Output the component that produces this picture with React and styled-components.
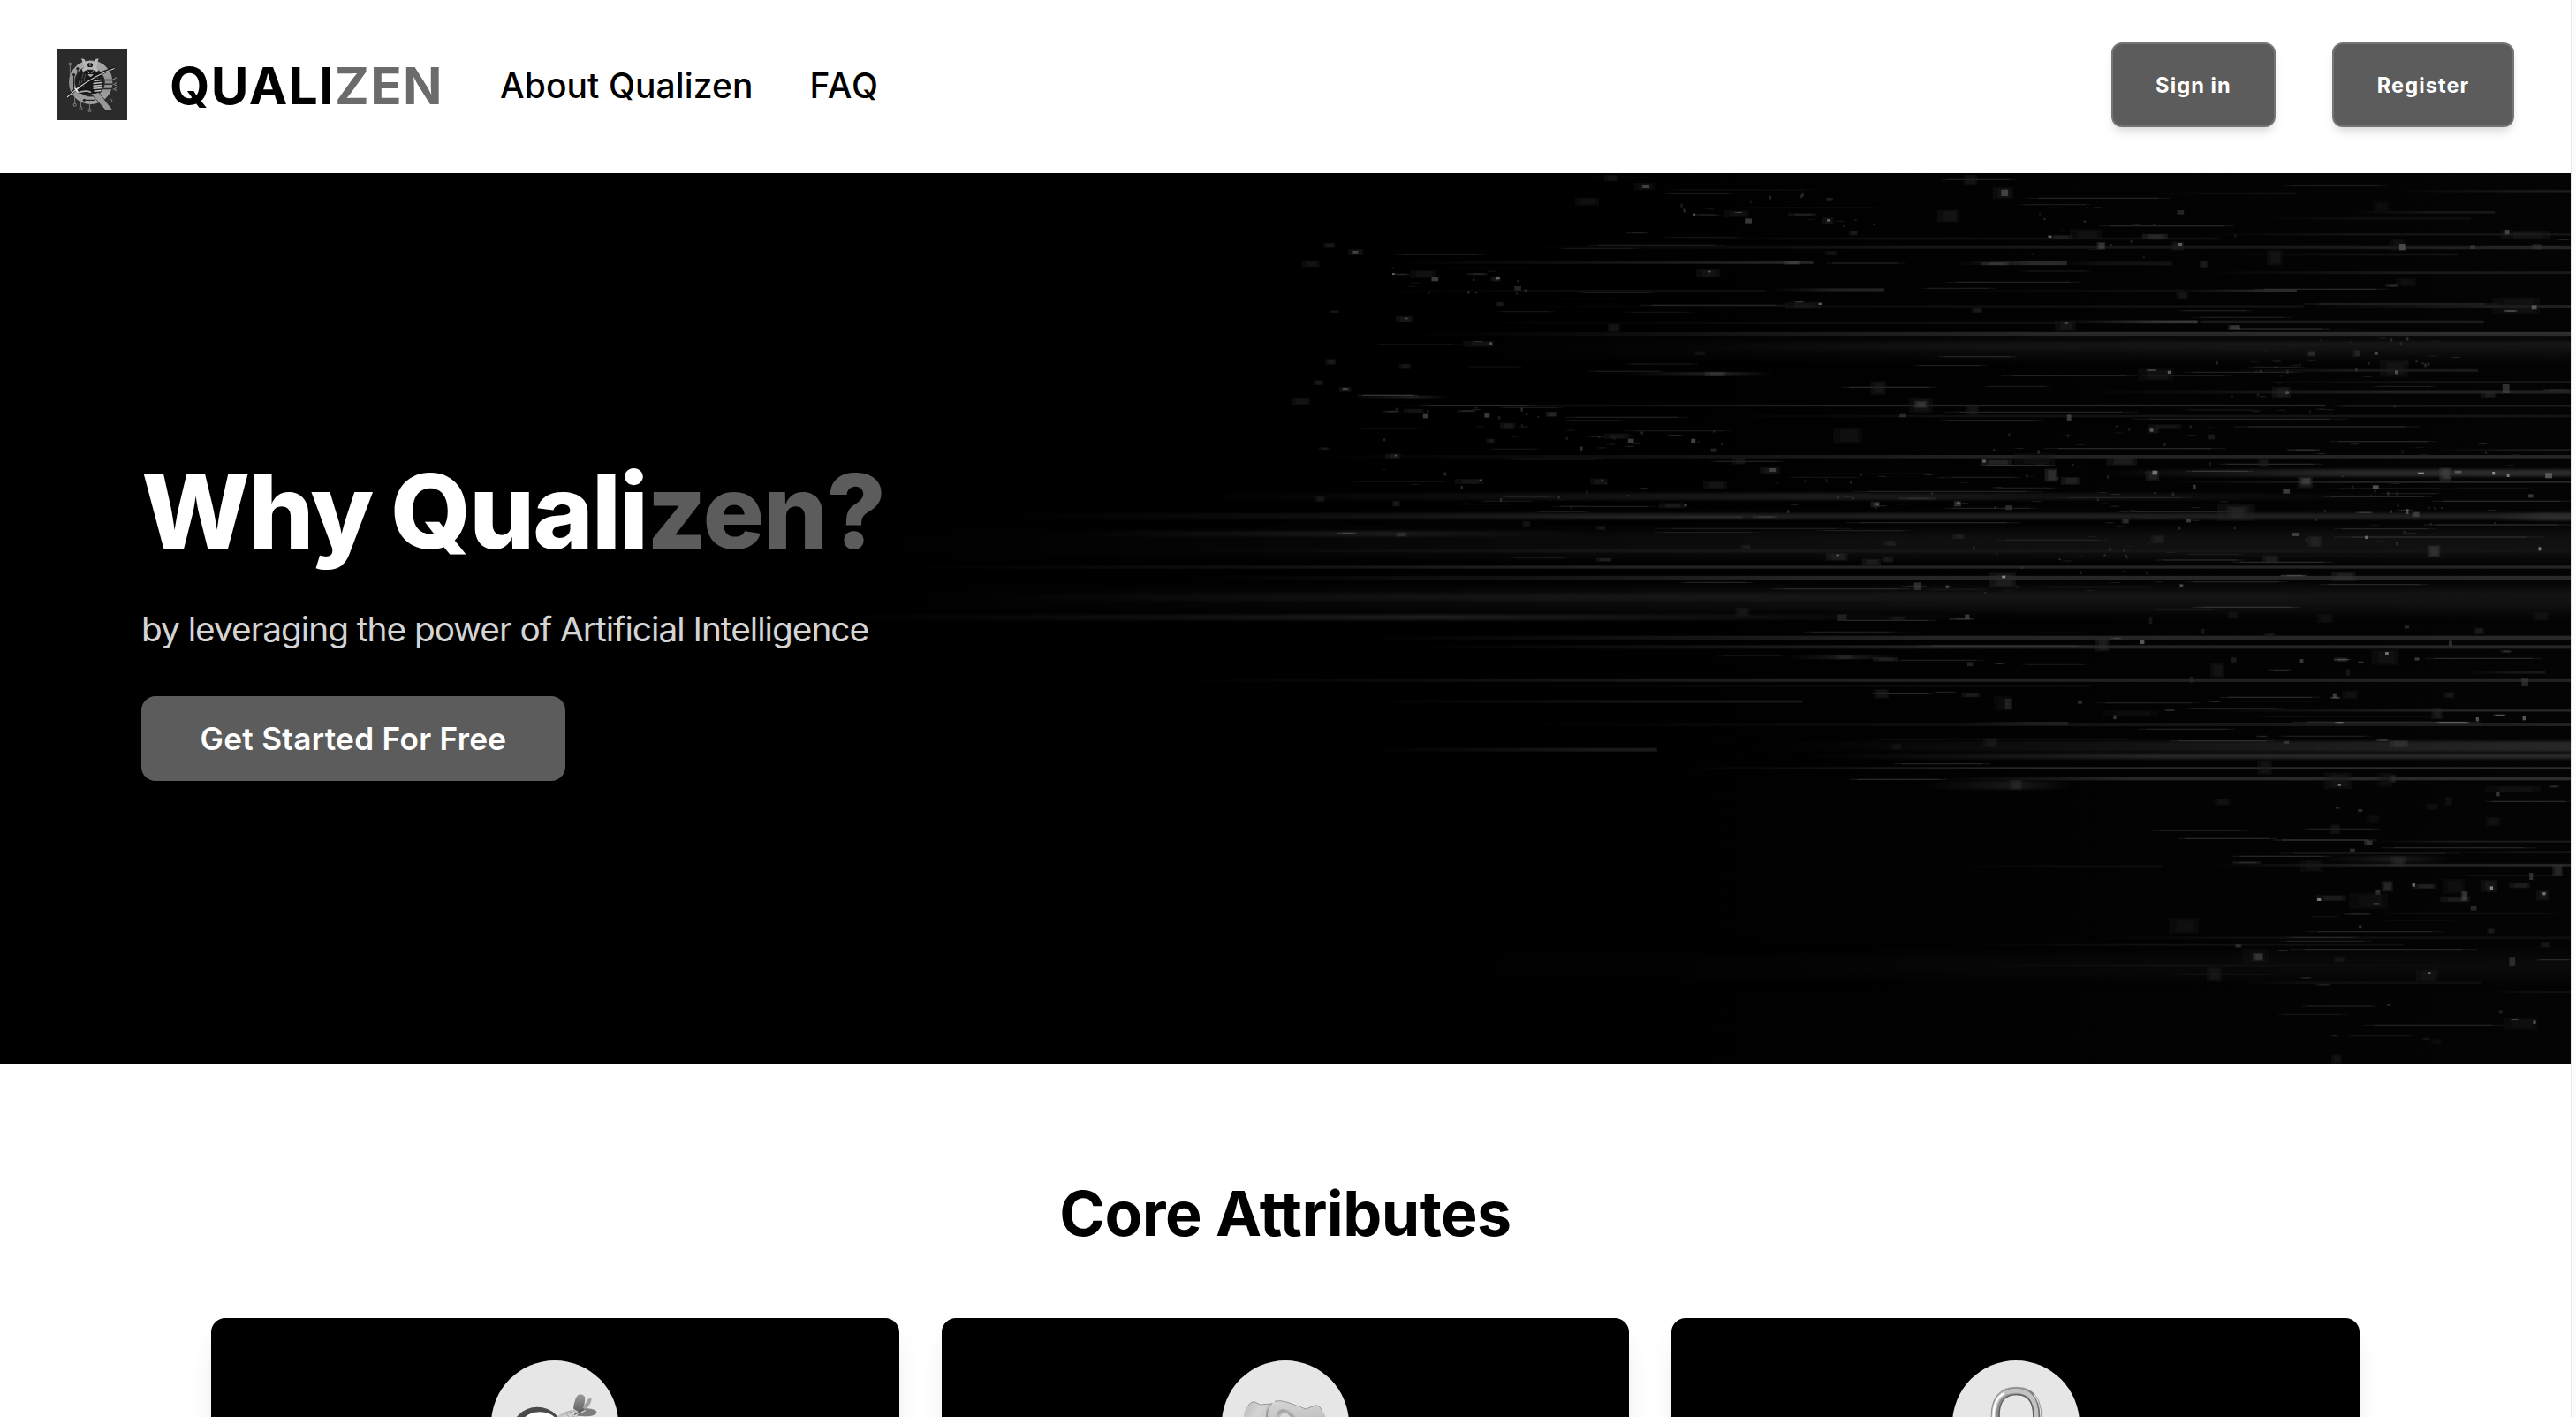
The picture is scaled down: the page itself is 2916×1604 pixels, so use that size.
import React from 'react';
import styled, { createGlobalStyle } from 'styled-components';

const GlobalStyle = createGlobalStyle`
  *, *::before, *::after { box-sizing: border-box; }
  html, body { margin: 0; padding: 0; background: #fff; }
  body {
    height: 1604px;
    overflow: hidden;
    font-family: Inter, 'Noto Sans', 'Liberation Sans', sans-serif;
    color: #000;
  }
  h1, h2, p { margin: 0; }
`;

const Shell = styled.div`
  display: grid;
  grid-template-columns: minmax(0, 1fr) 6px;
  height: 1604px;
  overflow: hidden;
`;

const ScrollTrack = styled.div`
  background: #fcfcfc;
  border-left: 2px solid #e8e8e8;
`;

const Page = styled.main`
  display: flex;
  flex-direction: column;
  min-width: 0;
`;

const Header = styled.header`
  display: flex;
  justify-content: space-between;
  align-items: flex-start;
  height: 196px;
  flex: none;
  padding: 48px 64px 0;
`;

const HeaderGroup = styled.div`
  display: flex;
  align-items: center;
  height: 96px;
  gap: 64px;
`;

const Brand = styled.a`
  display: flex;
  align-items: center;
  gap: 48px;
`;

const Wordmark = styled.span`
  font-size: 58.4px;
  line-height: 72px;
  font-weight: 700;
  letter-spacing: 1.4px;
  padding-top: 2px;
`;

const Muted = styled.span`
  color: ${p => p.$color};
`;

const NavLink = styled.a`
  font-size: 39px;
  line-height: 56px;
  font-weight: 500;
  letter-spacing: ${p => p.$spacing}px;
  padding-top: 2px;
`;

const AuthButton = styled.button`
  width: ${p => p.$width}px;
  height: 96px;
  padding: 1px 0 0;
  border: 2px solid #757575;
  border-radius: 12px;
  background: #5c5c5c;
  box-shadow: 0 8px 12px -2px rgba(0, 0, 0, 0.1), 0 4px 8px -4px rgba(0, 0, 0, 0.1);
  color: #fff;
  font: 700 23.6px/32px Inter, sans-serif;
  letter-spacing: 1.1px;
`;

const Hero = styled.section`
  position: relative;
  display: flex;
  flex-direction: column;
  justify-content: center;
  align-items: flex-start;
  flex: none;
  height: 1008px;
  padding-left: 160px;
  background: #000;
  overflow: hidden;
`;

const Backdrop = styled.svg`
  position: absolute;
  inset: 0;
  width: 100%;
  height: 100%;
`;

const HeroTitle = styled.h1`
  position: relative;
  margin-bottom: 43px;
  font-size: 116.5px;
  line-height: 125px;
  font-weight: 800;
  letter-spacing: -1.9px;
  word-spacing: -3px;
  color: #fff;
`;

const HeroText = styled.p`
  position: relative;
  margin-bottom: 48px;
  font-size: 38.8px;
  line-height: 56px;
  letter-spacing: -1px;
  color: #d4d4d4;
`;

const HeroButton = styled.button`
  position: relative;
  width: 480px;
  height: 96px;
  padding: 0;
  border: 0;
  border-radius: 16px;
  background: #5c5c5c;
  color: #fff;
  font: 600 35.2px/56px Inter, sans-serif;
  letter-spacing: 0.3px;
`;

const Attributes = styled.section`
  display: flex;
  flex-direction: column;
  align-items: center;
  padding-top: 130px;
`;

const SectionTitle = styled.h2`
  margin-bottom: 78px;
  font-size: 69.9px;
  line-height: 80px;
  font-weight: 700;
  letter-spacing: -0.55px;
`;

const CardGrid = styled.div`
  display: grid;
  grid-template-columns: repeat(3, 1fr);
  gap: 48px;
  width: 2432px;
`;

const Card = styled.article`
  display: flex;
  justify-content: center;
  align-items: flex-start;
  height: 480px;
  padding-top: 48px;
  border-radius: 16px;
  background: #000;
  box-shadow: 0 20px 30px -6px rgba(0, 0, 0, 0.1), 0 8px 12px -8px rgba(0, 0, 0, 0.1);
`;

const IconDisc = styled.div`
  width: 144px;
  height: 144px;
  border-radius: 50%;
  background: #e6e6e6;
  overflow: hidden;
`;

/* Long glowing bands: [fade-in start, full brightness, end, centre y, height, grey, fades out at end] */
const midBands = [
  [340, 900, 1450, 66, 24, 30, 1], [180, 700, 1566, 133, 20, 32, 0], [240, 520, 710, 193, 18, 36, 1],
  [330, 900, 1566, 250, 13, 40, 0], [90, 700, 1566, 306, 10, 38, 0], [330, 900, 1566, 343, 15, 42, 0],
  [130, 1000, 1566, 408, 26, 44, 0], [50, 1000, 1566, 228, 90, 17, 0], [70, 1000, 1566, 415, 80, 18, 0],
  [30, 560, 1070, 476, 18, 34, 1], [500, 1000, 1566, 546, 14, 40, 0], [540, 1000, 1566, 577, 12, 38, 0],
  [330, 900, 1566, 691, 9, 36, 0], [497, 740, 887, 762, 9, 24, 0], [510, 700, 759, 926, 12, 26, 0],
  [1230, 1450, 1566, 793, 7, 40, 0], [620, 1500, 1566, 840, 12, 34, 0], [1030, 1090, 1121, 837, 12, 32, 0],
  [830, 1566, 1567, 915, 36, 44, 0], [880, 1200, 1566, 948, 18, 42, 0], [770, 1100, 1566, 989, 8, 46, 0],
  [1000, 1180, 1566, 1025, 10, 44, 0], [560, 900, 1140, 709, 8, 12, 0], [920, 1050, 1175, 890, 6, 16, 0],
  [870, 925, 975, 612, 14, 30, 1], [990, 1075, 1125, 1046, 28, 28, 1], [1470, 1510, 1541, 664, 8, 24, 0],
];

const topBands = [
  [200, 1000, 1562, 564, 13, 50, 0], [540, 1150, 1562, 605, 26, 50, 0], [230, 1000, 1562, 612, 60, 16, 0],
  [80, 900, 1562, 982, 14, 38, 0], [140, 700, 1275, 807, 7, 38, 0], [1280, 1300, 1562, 808, 7, 30, 0],
  [1000, 1300, 1562, 1036, 24, 44, 0], [1080, 1300, 1562, 1066, 8, 40, 0], [330, 800, 1562, 269, 12, 24, 0],
  [1180, 1500, 1562, 273, 8, 38, 0], [180, 620, 675, 322, 9, 38, 0], [840, 930, 972, 324, 13, 44, 0],
  [960, 1010, 1095, 325, 12, 18, 0], [200, 400, 620, 418, 8, 14, 0], [620, 700, 758, 414, 10, 34, 0],
  [1090, 1200, 1241, 417, 8, 44, 0], [760, 1090, 1110, 417, 8, 16, 0], [960, 1080, 1125, 523, 11, 56, 0],
  [1125, 1130, 1460, 523, 10, 28, 0], [240, 700, 960, 526, 10, 14, 0], [1350, 1500, 1562, 79, 7, 28, 0],
  [1130, 1300, 1562, 226, 7, 22, 0], [1120, 1350, 1562, 356, 9, 26, 0], [300, 900, 1250, 471, 9, 20, 0],
  [1250, 1470, 1562, 471, 12, 32, 0], [970, 1350, 1562, 762, 9, 34, 0], [1180, 1400, 1562, 728, 8, 24, 0],
  [520, 900, 1562, 843, 8, 20, 0], [1400, 1500, 1562, 959, 8, 30, 0], [450, 565, 630, 700, 13, 38, 1],
  [1160, 1300, 1453, 688, 9, 26, 0], [500, 700, 1150, 240, 8, 14, 0], [1300, 1400, 1473, 151, 8, 24, 0],
  [1190, 1300, 1445, 172, 8, 14, 0], [1060, 1150, 1240, 87, 8, 14, 0], [1130, 1300, 1430, 294, 8, 18, 0],
  [1470, 1530, 1562, 1185, 24, 46, 0], [130, 205, 250, 779, 12, 32, 1], [350, 560, 592, 1186, 7, 42, 0],
];

const lowBands = [
  [750, 1050, 1485, 939, 8, 50, 0], [50, 1200, 1562, 940, 80, 10, 0], [1070, 1300, 1562, 598, 9, 36, 0],
  [1290, 1400, 1562, 518, 6, 28, 0], [700, 950, 1335, 869, 6, 16, 0], [1380, 1500, 1562, 554, 7, 26, 0],
  [700, 900, 1010, 601, 6, 14, 0], [1450, 1500, 1562, 1029, 5, 18, 0], [1100, 1200, 1440, 998, 8, 14, 0],
  [1220, 1325, 1400, 578, 22, 30, 1], [910, 1100, 1562, 845, 8, 14, 0],
];

/* Hairline streaks: [start, end, y, grey] */
const topStreaks = [
  [405, 490, 34, 34], [825, 912, 40, 58], [1227, 1347, 60, 72], [500, 582, 88, 46], [505, 680, 75, 26],
  [925, 1092, 103, 60], [916, 1000, 125, 44], [595, 755, 136, 52], [1010, 1168, 197, 62], [500, 590, 236, 34],
  [410, 572, 262, 48], [378, 470, 274, 42], [185, 290, 295, 44], [690, 782, 324, 56], [235, 355, 343, 34],
  [830, 988, 388, 58], [803, 888, 409, 48], [1190, 1347, 412, 66], [400, 490, 424, 44], [370, 455, 445, 30],
  [472, 645, 466, 62], [1248, 1480, 462, 74], [305, 372, 488, 36], [455, 533, 490, 30], [1103, 1188, 485, 54],
  [1120, 1235, 508, 48], [1160, 1280, 546, 70], [1180, 1325, 550, 50], [160, 262, 600, 42], [822, 912, 641, 62],
  [455, 540, 666, 40], [792, 878, 671, 52], [412, 502, 691, 44], [1108, 1248, 694, 56], [895, 1055, 706, 58],
  [1060, 1165, 706, 42], [708, 820, 745, 66], [875, 953, 742, 44], [1330, 1404, 742, 46], [142, 212, 772, 88],
  [215, 350, 808, 64], [308, 382, 814, 44], [828, 1055, 829, 60], [1108, 1200, 822, 40], [385, 528, 847, 50],
  [383, 452, 857, 38], [824, 942, 857, 56], [1048, 1300, 853, 60], [1167, 1385, 879, 68], [455, 580, 893, 40],
  [1280, 1405, 929, 64], [945, 1158, 953, 66], [295, 355, 955, 34], [555, 640, 997, 56], [870, 958, 1010, 84],
  [1150, 1270, 1006, 66], [1112, 1190, 1030, 84], [660, 825, 1039, 44], [830, 918, 1051, 48], [645, 732, 1051, 34],
  [1280, 1420, 1090, 92], [1420, 1518, 1090, 70], [885, 960, 1087, 46], [722, 942, 1099, 58], [310, 372, 1118, 46],
  [960, 1120, 1120, 52], [1270, 1400, 1117, 60], [285, 348, 1132, 38], [1400, 1562, 1132, 70], [258, 322, 1142, 34],
  [370, 490, 1150, 50], [828, 938, 1156, 54], [1035, 1182, 1168, 56], [350, 412, 1168, 44], [714, 918, 1205, 64],
  [130, 172, 1219, 40], [490, 720, 1225, 46], [680, 788, 1232, 48], [1285, 1405, 1226, 60], [490, 612, 1238, 46],
  [1390, 1562, 1212, 72], [890, 1020, 1264, 50], [1285, 1530, 1254, 66], [320, 388, 1325, 36], [1075, 1180, 1332, 66],
  [1165, 1283, 1339, 68], [1110, 1180, 1312, 42], [520, 604, 1408, 42], [1110, 1230, 1406, 60], [1268, 1395, 1415, 62],
  [630, 786, 1430, 42], [810, 878, 1432, 36], [945, 1075, 1424, 48], [1122, 1244, 1492, 56], [1455, 1562, 267, 60],
  [180, 240, 421, 28], [268, 335, 675, 26], [150, 215, 755, 24], [145, 215, 886, 24], [135, 250, 1066, 28],
  [918, 1000, 351, 40], [1185, 1250, 676, 46], [1340, 1410, 1106, 48], [315, 430, 990, 32],
];

const midStreaks = [
  [782, 843, 358, 44], [860, 982, 380, 52], [1098, 1195, 373, 56], [918, 1005, 487, 62], [1230, 1325, 442, 60],
  [888, 970, 526, 50], [942, 992, 529, 46], [988, 1142, 573, 66], [845, 908, 580, 44], [968, 1046, 622, 52],
  [812, 872, 607, 30], [1435, 1538, 616, 66], [1080, 1138, 637, 38], [1088, 1140, 529, 40], [1195, 1252, 448, 34],
];

const midBlocks = [
  [828, 444, 12, 28, 34], [918, 466, 8, 22, 44], [1030, 467, 4, 14, 90], [1016, 479, 22, 6, 80], [963, 472, 14, 16, 34],
  [1145, 548, 12, 44, 44], [1159, 545, 9, 5, 90], [1184, 553, 4, 14, 130], [1293, 528, 10, 20, 34], [1340, 465, 14, 30, 24],
  [1530, 458, 14, 30, 26], [1478, 512, 9, 22, 40], [1417, 505, 4, 9, 60], [1388, 586, 24, 52, 26], [1400, 594, 3, 9, 160],
  [1355, 612, 12, 16, 46], [1355, 618, 14, 4, 120], [1325, 618, 3, 14, 80], [1264, 613, 5, 16, 40], [1246, 632, 12, 48, 30],
  [1426, 613, 4, 10, 80], [1297, 653, 20, 5, 60], [1366, 652, 3, 22, 34], [949, 612, 22, 14, 46], [916, 605, 16, 14, 44],
  [1032, 628, 5, 14, 50], [1056, 630, 9, 6, 66], [1228, 678, 3, 20, 44], [1520, 684, 6, 26, 58], [1502, 588, 9, 8, 66],
  [1262, 458, 8, 20, 24], [1238, 515, 3, 18, 34], [1192, 475, 3, 24, 34], [1456, 556, 3, 18, 66], [1376, 626, 5, 6, 70],
];

const lowStreaks = [
  [618, 700, 16, 74], [702, 732, 10, 52], [1088, 1222, 28, 66], [922, 1060, 47, 52], [1105, 1225, 41, 48],
  [1042, 1172, 67, 50], [1130, 1385, 92, 64], [1185, 1440, 112, 74], [1380, 1425, 113, 130], [978, 1108, 136, 54],
  [1020, 1162, 176, 68], [1168, 1290, 160, 52], [648, 778, 254, 60], [588, 720, 307, 72], [1445, 1562, 382, 66],
  [1200, 1304, 475, 52], [995, 1125, 481, 54], [1030, 1165, 508, 66], [1160, 1300, 513, 92], [1305, 1515, 539, 64],
  [1168, 1412, 558, 50], [1105, 1238, 568, 66], [1410, 1562, 632, 66], [1305, 1550, 761, 68], [1308, 1405, 787, 50],
  [1205, 1388, 824, 60], [1175, 1275, 844, 52], [1168, 1292, 856, 54], [1182, 1435, 884, 62], [1515, 1562, 920, 64],
  [1024, 1165, 968, 66], [1198, 1300, 1077, 50], [1165, 1260, 1105, 34], [1282, 1470, 1141, 60], [1260, 1350, 1178, 32],
  [1210, 1248, 773, 30], [618, 725, 172, 20],
];

/* Glowing blocks and sparks: [x, y, width, height, grey] */
const topBlocks = [
  [430, 24, 16, 22, 28], [465, 50, 24, 26, 26], [475, 57, 8, 12, 90], [396, 101, 28, 27, 24], [851, 24, 16, 34, 30],
  [885, 66, 24, 40, 28], [895, 74, 8, 22, 90], [820, 143, 26, 42, 30], [1330, 115, 20, 36, 18], [570, 144, 30, 24, 26],
  [583, 150, 9, 3, 110], [595, 172, 8, 16, 84], [534, 156, 28, 9, 44], [534, 155, 3, 6, 130], [645, 154, 34, 9, 48],
  [685, 168, 14, 24, 34], [691, 174, 4, 8, 140], [717, 213, 10, 16, 44], [689, 282, 14, 15, 34], [690, 102, 8, 8, 44],
  [102, 255, 13, 17, 40], [130, 276, 18, 21, 34], [136, 282, 6, 8, 96], [76, 316, 21, 21, 30], [456, 219, 25, 4, 52],
  [975, 208, 38, 34, 26], [950, 228, 28, 15, 42], [950, 230, 4, 7, 140], [1007, 252, 10, 26, 84], [1060, 224, 30, 17, 60],
  [1093, 250, 16, 31, 34], [1102, 255, 5, 9, 130], [1101, 144, 8, 14, 54], [1206, 278, 18, 54, 28], [1127, 316, 10, 23, 42],
  [1350, 240, 18, 42, 24], [1361, 258, 7, 22, 100], [1480, 216, 58, 26, 30], [1485, 210, 5, 16, 92], [1546, 240, 14, 5, 90],
  [1516, 258, 13, 20, 54], [1444, 262, 6, 14, 66], [538, 345, 28, 27, 32], [552, 350, 3, 5, 120], [872, 321, 32, 10, 74],
  [640, 316, 20, 13, 76], [203, 348, 30, 26, 28], [228, 369, 8, 16, 88], [182, 359, 20, 5, 60], [182, 357, 3, 6, 130],
  [270, 357, 23, 7, 54], [297, 368, 12, 18, 38], [304, 372, 4, 7, 140], [325, 402, 8, 14, 54], [303, 455, 10, 14, 42],
  [108, 484, 12, 8, 40], [186, 503, 21, 22, 36], [197, 509, 3, 5, 110], [642, 455, 42, 24, 32], [653, 453, 11, 4, 92],
  [681, 458, 4, 7, 130], [860, 476, 13, 16, 40], [434, 530, 15, 27, 34], [1470, 440, 56, 58, 26], [1516, 466, 6, 15, 120],
  [1483, 483, 16, 6, 110], [1357, 375, 24, 28, 22], [1100, 421, 14, 24, 34], [958, 518, 24, 36, 34], [969, 524, 4, 6, 110],
  [1161, 534, 14, 14, 86], [1345, 397, 15, 7, 70], [265, 588, 36, 20, 30], [276, 588, 12, 3, 80], [296, 592, 3, 8, 120],
  [535, 622, 14, 15, 28], [104, 649, 12, 19, 42], [190, 665, 14, 18, 36], [548, 692, 24, 16, 62], [90, 721, 11, 17, 38],
  [120, 744, 14, 17, 42], [124, 747, 6, 9, 90], [64, 782, 22, 22, 32], [742, 724, 18, 46, 34], [787, 780, 28, 52, 28],
  [793, 792, 15, 23, 72], [853, 806, 16, 34, 34], [1055, 682, 42, 40, 26], [1065, 684, 12, 6, 100], [1090, 689, 4, 10, 130],
  [1338, 654, 34, 56, 28], [1356, 688, 4, 12, 110], [1212, 743, 22, 38, 40], [1228, 760, 4, 8, 100], [1253, 622, 10, 18, 60],
  [1307, 618, 9, 24, 50], [1332, 626, 4, 9, 110], [1457, 758, 18, 22, 42], [1482, 735, 8, 30, 70], [1530, 750, 32, 9, 58],
  [195, 818, 24, 16, 32], [218, 836, 6, 14, 86], [172, 824, 18, 6, 64], [258, 822, 22, 7, 56], [290, 834, 6, 14, 88],
  [362, 828, 13, 17, 62], [308, 866, 18, 21, 38], [292, 920, 10, 14, 42], [698, 881, 34, 56, 25], [776, 836, 8, 11, 60],
  [972, 838, 5, 22, 84], [1066, 871, 40, 17, 32], [1066, 880, 14, 22, 34], [1069, 886, 4, 10, 130], [430, 902, 30, 18, 32],
  [411, 909, 20, 5, 70], [458, 920, 7, 15, 90], [504, 906, 18, 6, 64], [532, 920, 5, 14, 100], [555, 953, 7, 12, 52],
  [174, 970, 18, 20, 40], [185, 974, 2, 5, 120], [96, 949, 12, 9, 40], [612, 1016, 24, 24, 36], [624, 1020, 7, 12, 90],
  [546, 1064, 28, 27, 30], [580, 985, 16, 22, 34], [872, 991, 36, 18, 56], [873, 991, 4, 10, 130], [910, 970, 48, 40, 24],
  [946, 1022, 15, 44, 70], [965, 1050, 22, 26, 50], [1018, 984, 36, 26, 42], [1064, 1028, 16, 34, 48], [1072, 1028, 6, 14, 160],
  [1195, 988, 14, 28, 34], [1230, 955, 38, 8, 72], [1137, 905, 8, 17, 40], [1242, 1048, 18, 40, 44], [1245, 1052, 13, 24, 76],
  [1408, 1018, 13, 44, 72], [1383, 1034, 7, 5, 190], [1470, 1032, 3, 10, 200], [1487, 1040, 3, 10, 170], [1532, 1036, 8, 18, 120],
  [1330, 1078, 7, 12, 120], [1426, 1028, 8, 9, 110], [1148, 1143, 44, 56, 32], [1160, 1150, 22, 42, 40], [255, 1056, 34, 18, 34],
  [284, 1058, 3, 7, 120], [414, 1055, 20, 21, 36], [427, 1058, 2, 6, 110], [92, 1115, 11, 19, 36], [182, 1131, 9, 19, 42],
  [494, 1138, 30, 18, 38], [524, 1143, 3, 7, 110], [742, 1133, 11, 20, 60], [748, 1138, 4, 9, 100], [840, 1132, 8, 18, 70],
  [843, 1136, 4, 7, 130], [900, 1146, 8, 16, 60], [334, 1200, 10, 18, 32], [421, 1215, 11, 15, 38], [118, 1238, 22, 4, 100],
  [186, 1238, 13, 15, 62], [604, 1182, 28, 7, 66], [774, 1119, 44, 8, 58], [1036, 1192, 9, 16, 70], [1112, 1192, 5, 12, 90],
  [1236, 1239, 8, 12, 90], [1254, 1250, 16, 38, 46], [1070, 1248, 16, 28, 40], [838, 1245, 14, 16, 44], [758, 1266, 14, 18, 42],
  [590, 1280, 12, 16, 38], [690, 1308, 25, 26, 44], [702, 1313, 3, 5, 160], [732, 1328, 22, 20, 44], [755, 1320, 14, 20, 38],
  [1394, 1282, 15, 40, 66], [1524, 1288, 3, 12, 170], [1321, 1250, 3, 10, 150], [421, 1325, 18, 12, 50], [880, 1375, 32, 50, 44],
  [896, 1385, 4, 8, 190], [1222, 1382, 30, 5, 110], [1282, 1374, 28, 30, 50], [1200, 1316, 20, 26, 42], [778, 1418, 30, 8, 50],
  [793, 1408, 8, 26, 64], [830, 1418, 4, 9, 120], [1104, 1414, 4, 10, 110], [1376, 1168, 9, 18, 86], [1310, 1168, 20, 6, 80],
  [1358, 1162, 20, 5, 96], [1369, 1158, 3, 18, 110], [1225, 1092, 8, 14, 86], [1512, 1108, 6, 12, 80], [1120, 1076, 3, 16, 80],
];

const lowBlocks = [
  [621, 0, 20, 32, 34], [740, 14, 24, 14, 44], [783, 24, 24, 50, 20], [798, 33, 8, 36, 46], [896, 42, 6, 8, 66],
  [1013, 69, 14, 6, 70], [1072, 40, 17, 5, 62], [944, 88, 4, 14, 84], [930, 72, 75, 22, 18], [1236, 26, 14, 7, 90],
  [1240, 17, 5, 12, 90], [1252, 5, 22, 28, 26], [1390, 10, 14, 20, 36], [1373, 66, 15, 36, 40], [1433, 96, 4, 13, 120],
  [1457, 86, 16, 5, 130], [1496, 90, 4, 16, 130], [1243, 111, 12, 4, 150], [645, 186, 14, 20, 28], [768, 166, 20, 33, 30],
  [1137, 158, 15, 5, 58], [1174, 176, 7, 10, 70], [1299, 170, 16, 7, 80], [1316, 174, 26, 24, 58], [1138, 242, 20, 48, 30],
  [1228, 283, 38, 56, 28], [1247, 321, 4, 8, 170], [1316, 290, 9, 28, 50], [1300, 284, 20, 48, 22], [804, 309, 17, 32, 46],
  [1080, 372, 22, 23, 26], [1446, 330, 74, 22, 24], [1461, 348, 4, 16, 80], [1531, 328, 14, 6, 66], [1446, 435, 20, 30, 26],
  [1284, 427, 20, 30, 18], [1236, 460, 14, 32, 32], [1391, 365, 10, 32, 24], [1366, 390, 16, 20, 24], [1244, 402, 5, 5, 60],
  [1274, 408, 6, 9, 62], [1282, 514, 12, 16, 80], [1196, 580, 30, 40, 26], [1105, 586, 38, 7, 62], [1318, 568, 20, 34, 46],
  [1263, 542, 7, 10, 66], [1306, 652, 15, 36, 60], [1298, 684, 6, 15, 70], [1218, 700, 40, 20, 44], [1219, 708, 5, 12, 180],
  [1262, 692, 52, 54, 22], [1294, 726, 9, 5, 86], [1348, 662, 32, 16, 50], [1347, 660, 4, 11, 150], [1388, 645, 30, 50, 22],
  [1385, 704, 40, 20, 44], [1413, 686, 9, 34, 86], [1440, 648, 22, 42, 34], [1452, 670, 4, 14, 180], [1514, 682, 18, 36, 34],
  [1523, 690, 4, 10, 160], [1478, 658, 28, 18, 44], [1505, 624, 5, 24, 70], [1536, 596, 14, 40, 58], [1019, 778, 40, 52, 24],
  [1108, 867, 9, 11, 70], [1165, 885, 15, 5, 66], [1118, 880, 36, 52, 20], [1132, 897, 14, 26, 76], [1070, 946, 20, 44, 30],
  [1242, 910, 15, 17, 32], [1352, 952, 30, 42, 26], [1368, 961, 4, 6, 150], [1478, 910, 8, 30, 60], [1197, 978, 14, 5, 58],
  [1217, 1002, 20, 5, 50], [1255, 762, 36, 5, 62], [1426, 738, 8, 14, 58], [1448, 814, 10, 16, 44], [1520, 858, 14, 20, 36],
  [1470, 1115, 46, 42, 22], [1480, 1120, 11, 5, 110], [1510, 1126, 4, 11, 110], [1237, 1176, 10, 4, 50], [1360, 1186, 11, 4, 50],
  [1238, 1240, 14, 32, 28], [1372, 1188, 15, 18, 16], [1275, 802, 4, 12, 70], [1313, 1071, 5, 5, 60], [1464, 1090, 5, 12, 44],
];

/* Specks scattered through the dense parts of the field: [x, y, spread x, spread y, count, seed] */
const clusters = [
  [500, 80, 260, 120, 14, 3], [180, 330, 180, 100, 12, 7], [920, 130, 260, 170, 16, 11], [170, 800, 220, 120, 16, 5],
  [400, 880, 190, 80, 14, 17], [170, 1000, 320, 160, 16, 23], [620, 1040, 340, 130, 26, 31], [980, 1100, 200, 120, 22, 37],
  [1180, 570, 220, 110, 26, 41], [840, 860, 300, 200, 22, 43], [1250, 930, 300, 340, 40, 47], [820, 1250, 280, 200, 28, 53],
  [1130, 640, 300, 200, 20, 59],
];

const specks = clusters.flatMap(([x, y, w, h, count, seed]) => {
  let s = seed * 7919;
  const next = () => {
    s = (s * 16807) % 2147483647;
    return s / 2147483647;
  };
  return Array.from({ length: count }, () => {
    const flat = next() > 0.6;
    return [x + next() * w, y + next() * h, flat ? 11 : 2.5, flat ? 3 : 4 + next() * 9, 28 + Math.round(next() * 36)];
  });
});

const grey = v => `rgb(${v},${v},${v})`;

function Bands({ items, name }) {
  return items.map(([x0, x1, x2, y, h, g, out], i) => {
    const id = `${name}-${i}`;
    const peak = ((x1 - x0) / (x2 - x0)) * 100;
    return (
      <React.Fragment key={id}>
        <linearGradient id={id}>
          <stop offset="0%" stopColor={grey(g)} stopOpacity="0" />
          <stop offset={`${peak * 0.5}%`} stopColor={grey(g)} stopOpacity="0.42" />
          <stop offset={`${peak}%`} stopColor={grey(g)} stopOpacity="0.9" />
          <stop offset="100%" stopColor={grey(g)} stopOpacity={out ? 0 : 1} />
        </linearGradient>
        <rect
          x={x0} y={y - h / 2} width={x2 - x0} height={h}
          fill={`url(#${id})`}
          filter={h > 50 ? 'url(#haze)' : h > 16 ? 'url(#soft)' : 'url(#edge)'}
        />
      </React.Fragment>
    );
  });
}

function Streaks({ items }) {
  return items.map(([x0, x1, y, g], i) => (
    <g key={i} fill={grey(g)}>
      <rect x={x0} y={y - 1.8} width={x1 - x0} height="3.6" opacity="0.3" />
      <rect x={x0 + (x1 - x0) * 0.08} y={y - 1.8} width={(x1 - x0) * 0.84} height="3.6" opacity="0.45" />
    </g>
  ));
}

function Blocks({ items }) {
  return items.map(([x, y, w, h, g], i) => (
    <g key={i} fill={grey(g)}>
      <rect x={x} y={y} width={w} height={h} opacity={w > 8 ? 0.36 : 0.66} />
      {w > 8 && <rect x={x + w * 0.25} y={y + h * 0.12} width={w * 0.6} height={h * 0.76} opacity="0.42" />}
    </g>
  ));
}

function DataField() {
  return (
    <Backdrop viewBox="0 196 2910 1008" preserveAspectRatio="none" aria-hidden="true">
      <defs>
        <filter id="edge" x="-1%" width="102%" y="-60%" height="220%" colorInterpolationFilters="sRGB">
          <feGaussianBlur stdDeviation="0.5 2.2" />
        </filter>
        <filter id="soft" x="-1%" width="102%" y="-60%" height="220%" colorInterpolationFilters="sRGB">
          <feGaussianBlur stdDeviation="1 5" />
        </filter>
        <filter id="haze" x="-1%" width="102%" y="-60%" height="220%" colorInterpolationFilters="sRGB">
          <feGaussianBlur stdDeviation="2 18" />
        </filter>
        <linearGradient id="ambient">
          <stop offset="0.6" stopColor="#000" />
          <stop offset="1" stopColor="#040404" />
        </linearGradient>
      </defs>
      <rect y="196" width="2910" height="1008" fill="url(#ambient)" />
      <g transform="translate(900 540) scale(1.2857 0.33333)">
        <Bands items={midBands} name="mid" />
        <Streaks items={midStreaks} />
        <Blocks items={midBlocks} />
      </g>
      <g transform="translate(1400 190) scale(0.96684 0.33333)">
        <Bands items={topBands} name="top" />
        <Streaks items={topStreaks} />
        <Blocks items={topBlocks} />
        <Blocks items={specks} />
      </g>
      <g transform="translate(1600 780) scale(0.83929 0.33333)">
        <Bands items={lowBands} name="low" />
        <Streaks items={lowStreaks} />
        <Blocks items={lowBlocks} />
      </g>
    </Backdrop>
  );
}

function Logo() {
  return (
    <svg width="80" height="80" viewBox="0 0 80 80" role="img" aria-label="Qualizen logo">
      <defs>
        <linearGradient id="ring" x1="0" y1="0" x2="0" y2="1">
          <stop offset="0" stopColor="#a9a9a9" />
          <stop offset="0.5" stopColor="#8c8c8c" />
          <stop offset="1" stopColor="#a2a2a2" />
        </linearGradient>
      </defs>
      <rect width="80" height="80" fill="#2b2b2b" />
      <circle cx="38.7" cy="37.3" r="20.4" fill="none" stroke="url(#ring)" strokeWidth="8.6" />
      <circle cx="37" cy="36" r="16.4" fill="#202020" />
      <path d="M37.5 48 46 46.5 64 69H55.5z" fill="#989898" stroke="#2b2b2b" strokeWidth="0.8" />
      <path d="M53 34.5H65M53 39.3H65M53 44.5H65" stroke="#2b2b2b" strokeWidth="1.6" />
      <path d="M63.5 33.5H66M63.5 39.3H66M63.5 45H66M15.4 18V30M20.7 61V51L17 47M27.5 65V56L22 50M37.5 67.5V57.5" fill="none" stroke="#8e8e8e" strokeWidth="0.8" />
      <path d="M19.6 29V47M23.9 23V36M31.4 57.3H43" stroke="#222" strokeWidth="1.2" />
      <g fill="#2b2b2b" stroke="#9c9c9c" strokeWidth="0.8">
        <circle cx="15.4" cy="16.5" r="1.4" />
        <circle cx="67.1" cy="33.3" r="1.4" />
        <circle cx="67.1" cy="39.3" r="1.4" />
        <circle cx="67.1" cy="45" r="1.4" />
        <circle cx="20.7" cy="62.7" r="1.6" />
        <circle cx="27.5" cy="66.7" r="1.5" />
        <circle cx="37.5" cy="69" r="1.6" />
        <path d="M60.3 57.2q1.6-1.8 2.4 0v2.2" fill="none" />
      </g>
      <circle cx="23.9" cy="21.7" r="1.6" fill="#222" />
      <circle cx="19.6" cy="28.5" r="1.6" fill="#222" />
      <circle cx="31.4" cy="57.3" r="1.6" fill="#222" />
      <path d="M30 24 46 24 49 33 52 37 52 47 44 50 24 50 24 33z" fill="#181818" />
      <path d="M28 10.2 31.5 11 33.2 15 37.8 12.8 42.5 15 44.3 11 47.6 10.2 45 20.5 47.5 22.5 46 25.5 41 22.8H34.5L30 25.5 28.8 22.5 31.5 20z" fill="#b9b9b9" />
      <path d="M34 16.5Q37.8 12.5 42 16.5L40.5 20.5H35.5z" fill="#1a1a1a" stroke="#d0d0d0" strokeWidth="0.7" />
      <path d="M38 14.5V19M34 23.5 37 27M42 23.5 39.5 27M36 28.5H41L38.5 31z" stroke="#b0b0b0" strokeWidth="0.9" fill="#aaa" />
      <path d="M30.5 26.5 28.5 33M33 28 31 34M26 35 24.5 43M29 35 27 43M32 34 30.5 42M45 30 47 33" stroke="#6a6a6a" strokeWidth="0.8" />
      <path d="M42.5 35.5 50.5 34.5M41.5 38.5 51 37.5M41.5 41.3 51.5 40.6M41.5 44.2 51.5 43.5M42.5 47.2 50.5 46.6" stroke="#c4c4c4" strokeWidth="1.5" />
      <path d="M24 49Q33 45.5 39 48.5" stroke="#aaa" strokeWidth="1.6" fill="none" />
      <path d="M12 54 23 44Q45 27.5 65.5 21.3" stroke="#171717" strokeWidth="3" fill="none" />
      <path d="M12 54 23 44.5Q45 28.5 65.5 21.5" stroke="#cfcfcf" strokeWidth="1.1" fill="none" />
      <path d="M20.5 43.5 24.5 48.5M21.5 46.5 25.5 43" stroke="#e4e4e4" strokeWidth="1.4" />
    </svg>
  );
}

function TargetIcon() {
  return (
    <svg width="144" height="144" viewBox="0 0 144 144" aria-hidden="true">
      <defs>
        <linearGradient id="feather" x1="0" y1="0" x2="0" y2="1">
          <stop offset="0" stopColor="#9a9a9a" />
          <stop offset="1" stopColor="#5d5d5d" />
        </linearGradient>
        <linearGradient id="barrel" x1="0" y1="0" x2="0.4" y2="1">
          <stop offset="0" stopColor="#8e8e8e" />
          <stop offset="0.5" stopColor="#dadada" />
          <stop offset="1" stopColor="#858585" />
        </linearGradient>
      </defs>
      <circle cx="52.3" cy="83" r="30.2" fill="#4a4a4a" />
      <circle cx="55" cy="85.5" r="27.2" fill="#fff" />
      <circle cx="56" cy="88" r="20" fill="#4a4a4a" />
      <path d="M74 64.5Q83 56.5 96 55.5L102 61 82 76z" fill="url(#barrel)" />
      <path d="M85 59.5 90 67M89 57.5 94 65" stroke="#aaa" strokeWidth="1.2" />
      <path d="M101 58 109.5 44Q113.5 41 113.6 44.5 112.5 51 103 60z" fill="#a4a4a4" />
      <path d="M93 54.5Q94.5 42 98.5 39 103 37 106 41 107.5 49 101 59.5z" fill="url(#feather)" />
      <path d="M97 62.5Q103 54 108.5 54.3 119 55 119.5 58.5 119 62.5 109 63.3 101 63.5 97 62.5z" fill="#7d7d7d" />
      <path d="M94 61.5Q101 58 105 54.5" stroke="#555" strokeWidth="1.2" fill="none" />
      <path d="M101 59.5 107 56.5" stroke="#d0d0d0" strokeWidth="1.1" />
    </svg>
  );
}

function HandshakeIcon() {
  return (
    <svg width="144" height="144" viewBox="0 0 144 144" aria-hidden="true">
      <defs>
        <linearGradient id="palm" x1="0" y1="0" x2="1" y2="0.3">
          <stop offset="0" stopColor="#b9b9b9" />
          <stop offset="0.35" stopColor="#d4d4d4" />
          <stop offset="1" stopColor="#b0b0b0" />
        </linearGradient>
        <linearGradient id="grip" x1="0" y1="0" x2="0.2" y2="1">
          <stop offset="0" stopColor="#d6d6d6" />
          <stop offset="0.6" stopColor="#c6c6c6" />
          <stop offset="1" stopColor="#a4a4a4" />
        </linearGradient>
        <filter id="shade"><feGaussianBlur stdDeviation="0.9" /></filter>
      </defs>
      <path d="M24.5 66Q25 56 30 50.6 34 46.5 37 46.7 40 48 43.5 50L58 48.5 70 56 84 66V80H30z" fill="url(#palm)" />
      <path d="M58 49Q51 57 51 63L55 66" stroke="#858585" strokeWidth="2.6" fill="none" filter="url(#shade)" />
      <path d="M52 63Q52 54 57.5 48 62 44.8 68 45.5 76 46 82 50.5 88 54.5 95 55Q101 53.5 106 50.6 110 50.5 113.5 56 116.5 60 118.3 66V80H92L79 61.5Q74 56 68 56 65 57.5 62.5 61.5 59 66.5 54.5 65.5z" fill="url(#grip)" />
      <path d="M63 61.5Q66 56 70.5 56.3 76 58.5 82 65" stroke="#808080" strokeWidth="1.5" fill="none" filter="url(#shade)" />
      <path d="M30 50.6Q34 46.3 37 46.7L43.5 50 57 49M60 46.2Q66 44.7 74 47.2L95 55 106.5 50.6Q111 51 114 57" stroke="#8f8f8f" strokeWidth="0.9" fill="none" />
      <path d="M66 64Q69 58 74 60L82 68H66z" fill="#d9d9d9" />
    </svg>
  );
}

function PadlockIcon() {
  return (
    <svg width="144" height="144" viewBox="0 0 144 144" fill="none" aria-hidden="true">
      <defs>
        <linearGradient id="steel">
          <stop offset="0" stopColor="#8a8a8a" />
          <stop offset="0.5" stopColor="#a9a9a9" />
          <stop offset="1" stopColor="#6e6e6e" />
        </linearGradient>
      </defs>
      <path d="M48.5 90V62C48.5 43 58 34.5 72.3 34.5S96.2 43 96.2 62V90" stroke="url(#steel)" strokeWidth="9.5" />
      <path d="M47.2 90V62C47.5 42 57.5 34 72 34S94.8 44 94.8 62V90" stroke="#c3c3c3" strokeWidth="5.2" />
      <path d="M46.7 90V62C47 50 51 41.5 58 37.5" stroke="#fff" strokeWidth="2.4" />
      <path d="M53 90V62C53 46 60.5 38.5 72.3 38.5S91.8 46 91.8 62V90" stroke="#5e5e5e" strokeWidth="1.6" />
      <path d="M99.8 90V62C99.8 52 97 44 92 38" stroke="#e4e4e4" strokeWidth="1.2" />
      <path d="M58 34.5Q72 27.5 86 34.5" stroke="#909090" strokeWidth="1.4" />
    </svg>
  );
}

const attributeIcons = [TargetIcon, HandshakeIcon, PadlockIcon];

export default function App() {
  return (
    <>
      <GlobalStyle />
      <Shell>
        <Page>
          <Header>
            <HeaderGroup>
              <Brand>
                <Logo />
                <Wordmark>QUALI<Muted $color="#6b6b6b">ZEN</Muted></Wordmark>
              </Brand>
              <NavLink $spacing={0.1}>About Qualizen</NavLink>
              <NavLink $spacing={0.9}>FAQ</NavLink>
            </HeaderGroup>
            <HeaderGroup>
              <AuthButton $width={186}>Sign in</AuthButton>
              <AuthButton $width={206}>Register</AuthButton>
            </HeaderGroup>
          </Header>
          <Hero>
            <DataField />
            <HeroTitle>Why Quali<Muted $color="#5c5c5c">zen?</Muted></HeroTitle>
            <HeroText>by leveraging the power of Artificial Intelligence</HeroText>
            <HeroButton>Get Started For Free</HeroButton>
          </Hero>
          <Attributes>
            <SectionTitle>Core Attributes</SectionTitle>
            <CardGrid>
              {attributeIcons.map((Icon, i) => (
                <Card key={i}>
                  <IconDisc><Icon /></IconDisc>
                </Card>
              ))}
            </CardGrid>
          </Attributes>
        </Page>
        <ScrollTrack />
      </Shell>
    </>
  );
}
